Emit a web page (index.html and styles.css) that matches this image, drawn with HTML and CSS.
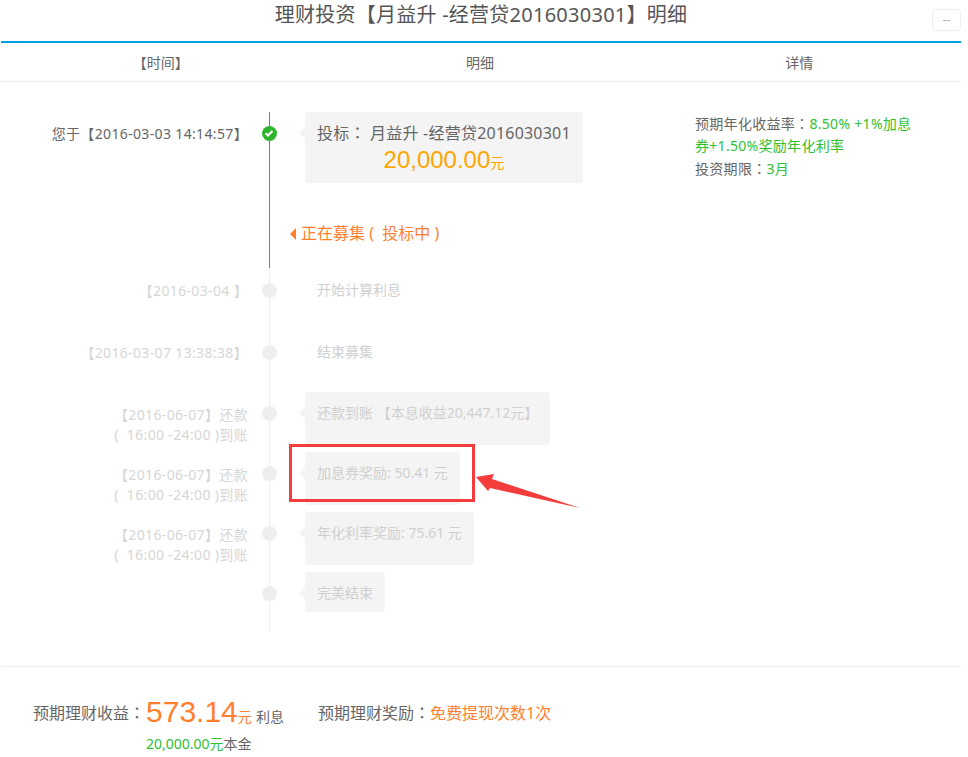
FILE: index.html
```html
<!DOCTYPE html>
<html lang="zh-CN">
<head>
    <meta charset="UTF-8">
    <meta name="viewport" content="width=device-width, initial-scale=1.0">
    <title>理财投资明细</title>
    <link rel="stylesheet" href="styles.css">
</head>
<body>

    <div class="page">
        <div class="top-bar">
            <h1>理财投资【月益升 -经营贷2016030301】明细</h1>
            <button class="close-btn">--</button>
        </div>

        <div class="col-heads">
            <div>【时间】</div>
            <div>明细</div>
            <div>详情</div>
        </div>

        <div class="main">
            <div class="timeline">
                <div class="row row-top">
                    <div class="time">您于【2016-03-03 14:14:57】</div>
                    <div class="dot dot-done">
                        <svg viewBox="0 0 16 16" width="16" height="16"><path d="M4.6 8.2 7 10.5 11.4 5.9" fill="none" stroke="#fff" stroke-width="2.2"/></svg>
                    </div>
                    <div class="bubble bubble-main">
                        <p>投标<span class="colon" lang="zh-TW">：</span> 月益升 -经营贷2016030301</p>
                        <p class="invest"><strong>20,000.00</strong>元</p>
                    </div>
                </div>

                <div class="status">正在募集&nbsp;(&nbsp;&nbsp;投标中&nbsp;)</div>

                <div class="row row-plain row-first">
                    <div class="time">【2016-03-04 】</div>
                    <div class="dot"></div>
                    <div class="bubble bubble-plain">开始计算利息</div>
                </div>
                <div class="row row-plain">
                    <div class="time">【2016-03-07 13:38:38】</div>
                    <div class="dot"></div>
                    <div class="bubble bubble-plain">结束募集</div>
                </div>
                <div class="row">
                    <div class="time">【2016-06-07】还款<br>(&nbsp;&nbsp;16:00 -24:00 )到账</div>
                    <div class="dot"></div>
                    <div class="bubble">还款到账 【本息收益20,447.12元】</div>
                </div>
                <div class="row">
                    <div class="time">【2016-06-07】还款<br>(&nbsp;&nbsp;16:00 -24:00 )到账</div>
                    <div class="dot"></div>
                    <div class="bubble">
                        加息券奖励: 50.41 元
                        <div class="mark-box"></div>
                        <svg class="mark-arrow" viewBox="0 0 106 40" width="106" height="40">
                            <polygon points="1,7 19,4 17,9 105,38 15,18 13,21" fill="#f33c3c"/>
                        </svg>
                    </div>
                </div>
                <div class="row">
                    <div class="time">【2016-06-07】还款<br>(&nbsp;&nbsp;16:00 -24:00 )到账</div>
                    <div class="dot"></div>
                    <div class="bubble">年化利率奖励: 75.61 元</div>
                </div>
                <div class="row row-last">
                    <div class="time"></div>
                    <div class="dot"></div>
                    <div class="bubble">完美结束</div>
                </div>
            </div>

            <div class="detail">
                <div>预期年化收益率<span class="colon" lang="zh-TW">：</span><span class="green">8.50% +1%加息</span></div>
                <div class="green">券+1.50%奖励年化利率</div>
                <div>投资期限<span class="colon" lang="zh-TW">：</span><span class="green">3月</span></div>
            </div>
        </div>

        <div class="summary">
            <div class="income">
                <span class="income-label">预期理财收益<span class="colon" lang="zh-TW">：</span></span>
                <div class="income-value">
                    <div class="income-top"><strong>573.14</strong><span class="unit">元</span> <span class="small">利息</span></div>
                    <div class="small"><span class="green">20,000.00元</span>本金</div>
                </div>
            </div>
            <div class="reward">预期理财奖励<span class="colon" lang="zh-TW">：</span><span class="orange">免费提现次数1次</span></div>
        </div>
    </div>

</body>
</html>
```
FILE: styles.css
```css
* {
    margin: 0;
    padding: 0;
    box-sizing: border-box;
}

body {
    font-family: "Noto Sans", "Noto Sans CJK SC", sans-serif;
    font-size: 14px;
    color: #666;
    background: #fff;
}

.page {
    width: 960px;
    margin-left: 1px;
}

.top-bar {
    display: grid;
    grid-template-columns: 60px 1fr 60px;
    height: 43px;
    border-bottom: 2px solid #00a0e0;
}

.top-bar h1 {
    grid-column: 2;
    text-align: center;
    font-size: 20px;
    font-weight: normal;
    line-height: 30px;
    letter-spacing: 0.25px;
    color: #555;
}

.close-btn {
    justify-self: end;
    width: 29px;
    height: 22px;
    margin-top: 9px;
    border: 1px solid #eee;
    border-radius: 3px;
    background: #fff;
    color: #aaa;
    font-size: 12px;
}

.col-heads {
    display: grid;
    grid-template-columns: repeat(3, 1fr);
    height: 39px;
    padding-right: 2px;
    line-height: 40px;
    text-align: center;
    border-bottom: 1px solid #eee;
}

.main {
    display: flex;
    padding-top: 30px;
    height: 585px;
    border-bottom: 1px solid #eee;
}

.timeline {
    position: relative;
    width: 694px;
    height: 520px;
}

/* the vertical rail, green up to the current step */
.timeline::before {
    content: "";
    position: absolute;
    left: 268px;
    top: 0;
    width: 1px;
    height: 100%;
    background: linear-gradient(to bottom, #3aa93a 156px, #eee 156px);
}

.row {
    position: relative;
    display: grid;
    grid-template-columns: 247px 42px 1fr;
    height: 40px;
    margin-bottom: 20px;
}

.row-top {
    height: 71px;
}

.row-plain {
    margin-bottom: 21px;
}

.row-first {
    margin-bottom: 22px;
}

.row-last {
    margin-bottom: 0;
}

.time {
    padding-top: 13px;
    text-align: right;
    line-height: 20px;
    letter-spacing: 0.35px;
    color: #d6d6d6;
    white-space: nowrap;
}

.row-plain .time {
    padding-top: 12px;
}

.row-top .time {
    color: #666;
    padding-top: 12px;
}

.dot {
    width: 15px;
    height: 15px;
    margin: 14px 0 0 14px;
    border-radius: 50%;
    background: #eee;
}

.dot-done {
    background: #2db52d;
}

.dot-done svg {
    display: block;
    margin: -1px 0 0 -1px;
}

.bubble {
    position: relative;
    justify-self: start;
    margin-left: 15px;
    padding: 11px 12px 9px;
    line-height: 20px;
    color: #d0d0d0;
    background: #f4f4f4;
    border-radius: 4px;
    white-space: nowrap;
}

.bubble::before {
    content: "";
    position: absolute;
    left: -6px;
    top: 15px;
    border-style: solid;
    border-width: 6px 6px 6px 0;
    border-color: transparent #f4f4f4 transparent transparent;
}

.bubble-plain {
    background: none;
}

.bubble-plain::before {
    display: none;
}

.bubble-main {
    height: 71px;
    padding-top: 10px;
    font-size: 16px;
    letter-spacing: 0.22px;
    color: #666;
}

.invest {
    margin-top: 2px;
    text-align: center;
    color: #ffa500;
    font-size: 14px;
    line-height: 30px;
    letter-spacing: 0;
}

.invest strong {
    font-family: "Liberation Sans", sans-serif;
    font-size: 24px;
    font-weight: normal;
}

.colon {
    font-family: "Noto Sans CJK TC", sans-serif;
}

.status {
    position: relative;
    height: 56px;
    margin-top: 30px;
    padding: 8px 0 0 300px;
    font-size: 16px;
    line-height: 24px;
    color: #ff7f2e;
}

.status::before {
    content: "";
    position: absolute;
    left: 289px;
    top: 15px;
    border-style: solid;
    border-width: 6px 6px 6px 0;
    border-color: transparent #ff7f2e transparent transparent;
}

.mark-box {
    position: absolute;
    left: -16px;
    top: -8px;
    width: 186px;
    height: 58px;
    border: 3px solid #f33c3c;
}

.mark-arrow {
    position: absolute;
    left: 170px;
    top: 18px;
}

.detail {
    width: 230px;
    line-height: 22px;
    letter-spacing: 0.3px;
}

.green {
    color: #2fbf2f;
}

.orange {
    color: #ff7f2e;
}

.summary {
    display: flex;
    align-items: flex-start;
    gap: 34px;
    padding: 27px 0 0 32px;
    font-size: 16px;
}

.income {
    display: flex;
    align-items: flex-start;
}

.income-label {
    line-height: 36px;
}

.income-value {
    margin-left: 1px;
}

.income-top {
    line-height: 36px;
    white-space: nowrap;
}

.income-top strong {
    font-family: "Liberation Sans", sans-serif;
    font-size: 30px;
    font-weight: normal;
    color: #ff7f2e;
}

.unit {
    color: #ff7f2e;
    font-size: 14px;
}

.small {
    font-size: 14px;
}

.income .small {
    line-height: 18px;
}

.reward {
    line-height: 36px;
}
```
